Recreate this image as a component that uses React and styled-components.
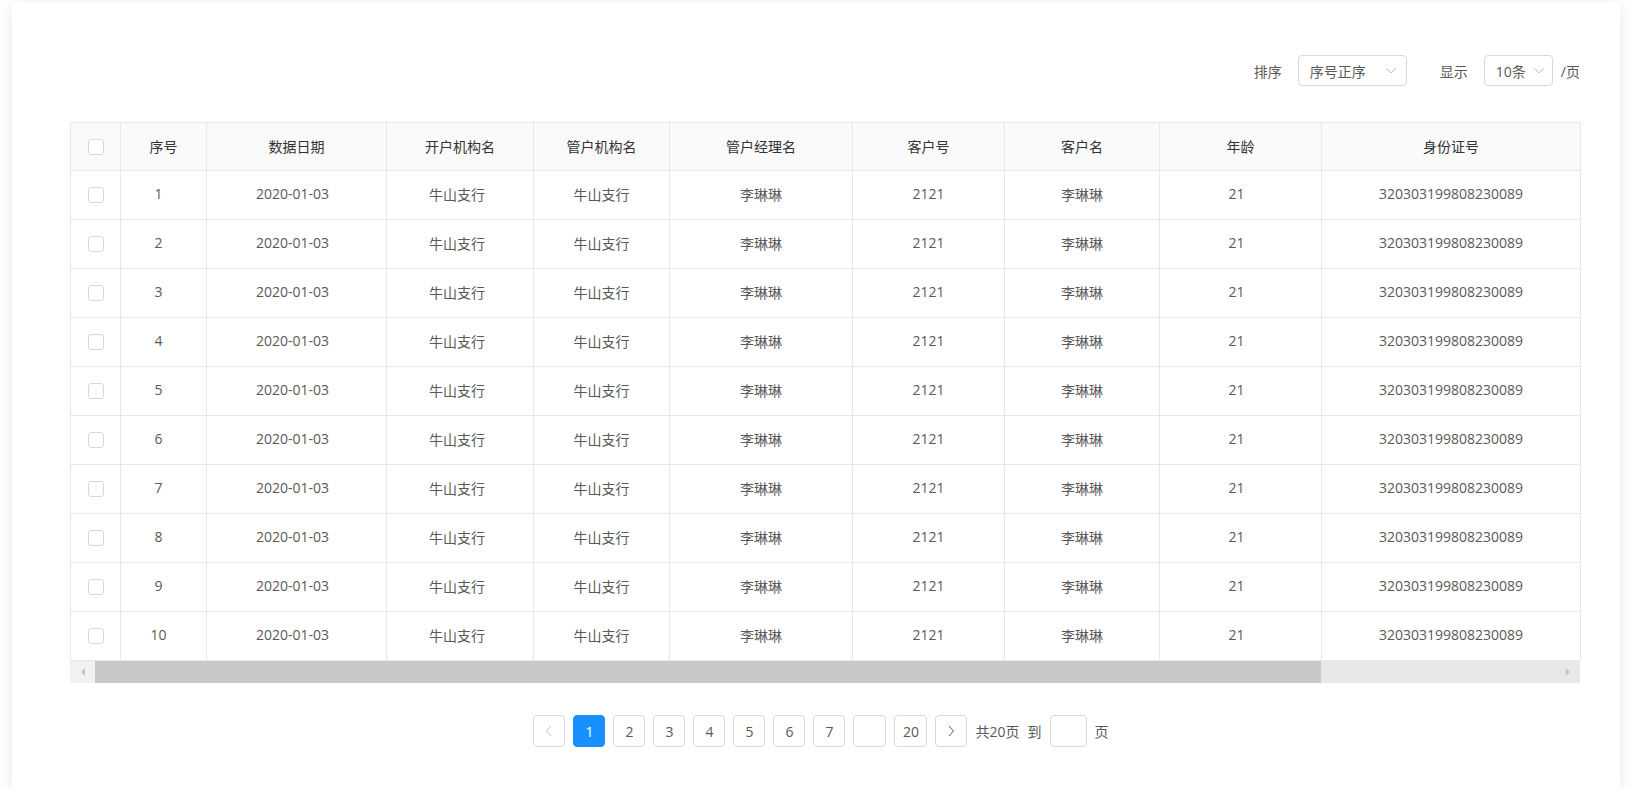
import React from "react";
import styled, { createGlobalStyle } from "styled-components";

const Global = createGlobalStyle`
  html, body { margin: 0; padding: 0; background: #fff; }
  body { font-family: "Open Sans", "Noto Sans CJK SC", sans-serif; font-size: 14px; color: #595959; }
  * { box-sizing: border-box; }
`;

const Page = styled.div`
  padding: 2px 12px 0 12px;
`;

const Card = styled.div`
  background: #fff;
  height: 786px;
  box-shadow: 0 3px 14px rgba(0, 0, 0, 0.1);
  padding: 53px 40px 0 58px;
  display: flex;
  flex-direction: column;
`;

const Toolbar = styled.div`
  display: flex;
  justify-content: flex-end;
  align-items: center;
  height: 31px;
  margin-bottom: 36px;
  color: #595959;
`;

const Label = styled.span`
  margin-right: ${p => p.$mr ?? 16}px;
  margin-left: ${p => p.$ml ?? 0}px;
`;

const Select = styled.div`
  width: ${p => p.$w}px;
  height: 31px;
  border: 1px solid #d9d9d9;
  border-radius: 4px;
  display: flex;
  align-items: center;
  justify-content: space-between;
  padding: 0 ${p => p.$pr}px 0 11px;
  color: #595959;
`;

const Chevron = () => (
  <svg width="10" height="6" viewBox="0 0 10 6" fill="none">
    <path d="M0.5 0.5L5 5L9.5 0.5" stroke="#bfbfbf" strokeWidth="1" />
  </svg>
);

const Table = styled.table`
  width: 1510px;
  table-layout: fixed;
  border-collapse: collapse;
`;

const HeadRow = styled.tr`
  height: 48px;
  background: #fafafa;
`;

const BodyRow = styled.tr`
  height: 49px;
  background: #fff;
`;

const Th = styled.th`
  border: 1px solid #e8e8e8;
  font-weight: 400;
  color: #333;
  text-align: center;
  padding: 0 0 2px 0;
`;

const Td = styled.td`
  border: 1px solid #e8e8e8;
  color: #595959;
  text-align: center;
  padding: 0 ${p => p.$pr ?? 0}px 3px 0;
`;

const Check = styled.span`
  display: inline-block;
  width: 16px;
  height: 16px;
  border: 1px solid #d9d9d9;
  border-radius: 3px;
  background: #fff;
  vertical-align: middle;
`;

const ScrollBar = styled.div`
  width: 1510px;
  height: 22px;
  display: flex;
  background: #e8e8e8;
`;

const ScrollBtn = styled.div`
  width: 25px;
  height: 100%;
  display: flex;
  align-items: center;
  justify-content: center;
  background: ${p => p.$bg || "transparent"};
`;

const Thumb = styled.div`
  height: 100%;
  background: #c8c8c8;
`;

const Track = styled.div`
  flex: 1;
  display: flex;
  justify-content: flex-end;
`;

const Tri = ({ dir }) => (
  <svg width="6" height="8" viewBox="0 0 6 8">
    {dir === "left" ? <path d="M5 0L1 4L5 8Z" fill="#c4c4c4" /> : <path d="M1 0L5 4L1 8Z" fill="#c4c4c4" />}
  </svg>
);

const Pager = styled.div`
  display: flex;
  align-items: center;
  justify-content: center;
  margin-top: 32px;
  gap: 8px;
  padding-right: 8px;
`;

const PageBtn = styled.div`
  min-width: ${p => p.$w || 32}px;
  height: 32px;
  border: 1px solid ${p => (p.$active ? "#1890ff" : "#d9d9d9")};
  border-radius: 4px;
  background: ${p => (p.$active ? "#1890ff" : "#fff")};
  color: ${p => (p.$active ? "#fff" : "#595959")};
  display: flex;
  align-items: center;
  justify-content: center;
  font-size: 14px;
`;

const PagerText = styled.span`
  color: #595959;
`;

const JumpInput = styled.div`
  width: 37px;
  height: 32px;
  border: 1px solid #d9d9d9;
  border-radius: 4px;
  background: #fff;
`;

const cols = [50, 86, 180, 147, 136, 183, 152, 155, 162, 259];
const headers = ["", "序号", "数据日期", "开户机构名", "管户机构名", "管户经理名", "客户号", "客户名", "年龄", "身份证号"];

const Arrow = ({ dir, color }) => (
  <svg width="8" height="12" viewBox="0 0 8 12" fill="none">
    {dir === "left" ? (
      <path d="M6 1L1.5 6L6 11" stroke={color} strokeWidth="1" />
    ) : (
      <path d="M2 1L6.5 6L2 11" stroke={color} strokeWidth="1" />
    )}
  </svg>
);

export default function App() {
  const rows = Array.from({ length: 10 }, (_, i) => i + 1);
  return (
    <>
      <Global />
      <Page>
        <Card>
          <Toolbar>
            <Label $mr={16}>排序</Label>
            <Select $w={109} $pr={10}>
              <span>序号正序</span>
              <Chevron />
            </Select>
            <Label $ml={33} $mr={16}>显示</Label>
            <Select $w={69} $pr={8}>
              <span>10条</span>
              <Chevron />
            </Select>
            <Label $ml={8} $mr={0}>/页</Label>
          </Toolbar>
          <Table>
            <colgroup>
              {cols.map((w, i) => (
                <col key={i} style={{ width: w }} />
              ))}
            </colgroup>
            <thead>
              <HeadRow>
                {headers.map((h, i) => (
                  <Th key={i}>{i === 0 ? <Check /> : h}</Th>
                ))}
              </HeadRow>
            </thead>
            <tbody>
              {rows.map(n => (
                <BodyRow key={n}>
                  <Td><Check /></Td>
                  <Td $pr={10}>{n}</Td>
                  <Td $pr={8}>2020-01-03</Td>
                  <Td $pr={6}>牛山支行</Td>
                  <Td>牛山支行</Td>
                  <Td>李琳琳</Td>
                  <Td>2121</Td>
                  <Td>李琳琳</Td>
                  <Td $pr={8}>21</Td>
                  <Td>320303199808230089</Td>
                </BodyRow>
              ))}
            </tbody>
          </Table>
          <ScrollBar>
            <ScrollBtn $bg="#f1f1f1"><Tri dir="left" /></ScrollBtn>
            <Thumb style={{ width: 1226 }} />
            <Track>
              <ScrollBtn><Tri dir="right" /></ScrollBtn>
            </Track>
          </ScrollBar>
          <Pager>
            <PageBtn><Arrow dir="left" color="#c8c8c8" /></PageBtn>
            <PageBtn $active>1</PageBtn>
            <PageBtn>2</PageBtn>
            <PageBtn>3</PageBtn>
            <PageBtn>4</PageBtn>
            <PageBtn>5</PageBtn>
            <PageBtn>6</PageBtn>
            <PageBtn>7</PageBtn>
            <PageBtn $w={33}></PageBtn>
            <PageBtn $w={33}>20</PageBtn>
            <PageBtn><Arrow dir="right" color="#595959" /></PageBtn>
            <PagerText>共20页</PagerText>
            <PagerText>到</PagerText>
            <JumpInput />
            <PagerText>页</PagerText>
          </Pager>
        </Card>
      </Page>
    </>
  );
}
